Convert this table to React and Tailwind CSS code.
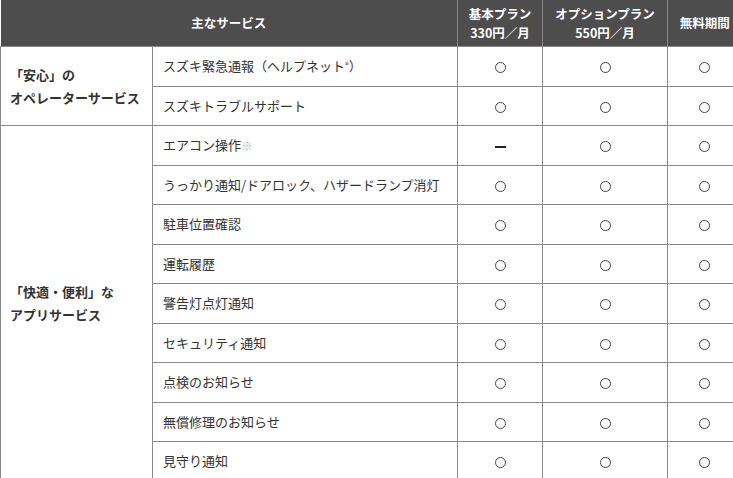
import React from "react";

const font = { fontFamily: '"Noto Sans CJK JP", "Noto Sans", sans-serif' };

const O = "○";

const group2 = [
  { name: (<>エアコン操作<span className="text-[10px] text-[#aaa] ml-[1px]">※</span></>), v: ["ー", O, O] },
  { name: "うっかり通知/ドアロック、ハザードランプ消灯", v: [O, O, O] },
  { name: "駐車位置確認", v: [O, O, O] },
  { name: "運転履歴", v: [O, O, O] },
  { name: "警告灯点灯通知", v: [O, O, O] },
  { name: "セキュリティ通知", v: [O, O, O] },
  { name: "点検のお知らせ", v: [O, O, O] },
  { name: "無償修理のお知らせ", v: [O, O, O] },
  { name: "見守り通知", v: [O, O, O] },
];

const heights = ["h-[40px]", "h-[39px]"];

function Mark({ v }) {
  if (v === "ー") {
    return <span className="inline-block w-[11px] h-[2px] bg-[#222] align-middle" />;
  }
  return <span className="inline-block w-[11px] h-[11px] rounded-full border border-[#444] align-middle" />;
}

export default function App() {
  const rows = [];
  rows.push({ group: 1, first: true, name: (<>スズキ緊急通報（ヘルプネット<span className="text-[8px] relative -top-[3px]">®</span>）</>), v: [O, O, O] });
  rows.push({ group: 1, name: "スズキトラブルサポート", v: [O, O, O] });
  group2.forEach((r, i) => rows.push({ group: 2, first: i === 0, ...r }));

  return (
    <div className="w-[733px] h-[478px] overflow-hidden bg-white" style={font}>
      <table className="table-fixed border-collapse w-[741px] text-[13px] text-[#333]">
        <colgroup>
          <col className="w-[152px]" />
          <col className="w-[305px]" />
          <col className="w-[85px]" />
          <col className="w-[125px]" />
          <col className="w-[74px]" />
        </colgroup>
        <thead>
          <tr className="h-[46px] bg-[#4d4d4d] text-white font-bold text-[12.5px] leading-[19px]">
            <th colSpan={2} className="border-r border-b border-[#8a8a8a] text-center">主なサービス</th>
            <th className="border-r border-b border-[#8a8a8a] text-center">基本プラン<br />330円／月</th>
            <th className="border-r border-b border-[#8a8a8a] text-center">オプションプラン<br />550円／月</th>
            <th className="border-b border-[#8a8a8a] text-center">無料期間</th>
          </tr>
        </thead>
        <tbody>
          {rows.map((r, i) => (
            <tr key={i} className={heights[i % 2]}>
              {r.first && r.group === 1 && (
                <td rowSpan={2} className="border border-[#8a8a8a] pl-[9px] font-bold leading-[23px]">
                  「安心」の<br />オペレーターサービス
                </td>
              )}
              {r.first && r.group === 2 && (
                <td rowSpan={9} className="border border-[#8a8a8a] pl-[9px] font-bold leading-[23px]">
                  「快適・便利」な<br />アプリサービス
                </td>
              )}
              <td className="border border-[#8a8a8a] pl-[10px] whitespace-nowrap">{r.name}</td>
              {r.v.map((v, j) => (
                <td key={j} className="border border-[#8a8a8a] text-center">
                  <Mark v={v} />
                </td>
              ))}
            </tr>
          ))}
        </tbody>
      </table>
    </div>
  );
}
